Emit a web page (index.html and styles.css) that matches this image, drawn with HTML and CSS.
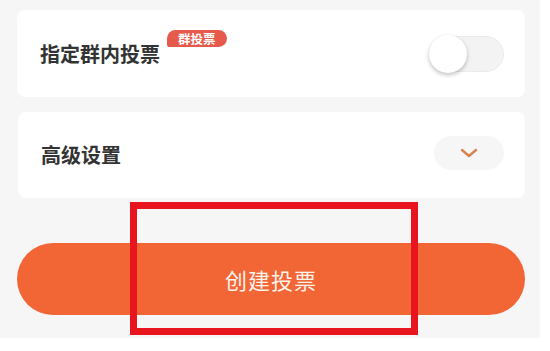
FILE: index.html
```html
<!DOCTYPE html>
<html lang="zh-CN">
<head>
  <meta charset="UTF-8">
  <meta name="viewport" content="width=device-width, initial-scale=1.0">
  <title>创建投票</title>
  <link rel="stylesheet" href="styles.css">
</head>
<body>
  <div class="screen">
    <div class="card">
      <div class="label-wrap">
        <span class="label">指定群内投票</span>
        <span class="badge">群投票</span>
      </div>
      <div class="switch">
        <div class="knob"></div>
      </div>
    </div>

    <div class="card card-adv">
      <span class="label">高级设置</span>
      <div class="expand">
        <svg width="18" height="10" viewBox="0 0 18 10">
          <path d="M2 2 L9 8 L16 2" fill="none" stroke="#d9824f" stroke-width="2.4" stroke-linecap="round" stroke-linejoin="round"/>
        </svg>
      </div>
    </div>

    <button class="create-btn">创建投票</button>

    <div class="highlight"></div>
  </div>
</body>
</html>
```

FILE: styles.css
```css
body {
  margin: 0;
  background: #ffffff;
  font-family: "Noto Sans CJK SC", "Noto Sans", sans-serif;
}

.screen {
  position: relative;
  width: 540px;
  height: 338px;
  box-sizing: border-box;
  padding: 10px 15px 0 17px;
  background: #f6f6f6;
}

.card {
  height: 87px;
  box-sizing: border-box;
  padding: 0 21px 0 23px;
  background: #ffffff;
  border-radius: 8px;
  display: flex;
  align-items: center;
  justify-content: space-between;
}

.card-adv {
  margin-top: 15px;
  height: 86px;
  margin-left: 1px;
}

.label-wrap {
  display: flex;
  align-items: center;
}

.label {
  font-size: 20px;
  font-weight: bold;
  color: #333333;
  line-height: 28px;
}

.badge {
  align-self: flex-start;
  margin: -10px 0 0 7px;
  padding: 0 11px;
  height: 17px;
  line-height: 17px;
  font-size: 12.5px;
  font-weight: bold;
  color: #ffffff;
  background: #e65a4b;
  border-radius: 9px 9px 9px 3px;
}

.switch {
  position: relative;
  width: 74px;
  height: 36px;
  box-sizing: border-box;
  background: #f3f3f3;
  border: 1px solid #ececec;
  border-radius: 18px;
}

.knob {
  position: absolute;
  left: -2px;
  top: -2px;
  width: 38px;
  height: 38px;
  border-radius: 50%;
  background: #ffffff;
  box-shadow: 0 2px 4px rgba(0, 0, 0, 0.25);
}

.expand {
  width: 70px;
  height: 34px;
  margin-top: -4px;
  border-radius: 17px;
  background: #f6f6f6;
  display: flex;
  align-items: center;
  justify-content: center;
}

.create-btn {
  display: block;
  width: 100%;
  height: 72px;
  margin-top: 45px;
  border: none;
  border-radius: 36px;
  background: #f26535;
  color: #fff3ec;
  font-family: "Noto Sans CJK SC", "Noto Sans", sans-serif;
  font-size: 22px;
  letter-spacing: 1px;
}

.highlight {
  position: absolute;
  left: 130px;
  top: 202px;
  width: 288px;
  height: 133px;
  box-sizing: border-box;
  border: 7px solid #e8141e;
}
```
